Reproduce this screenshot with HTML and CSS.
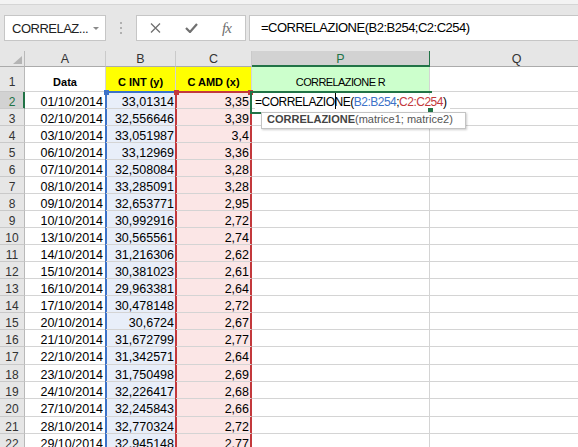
FILE: index.html
```html
<!DOCTYPE html>
<html lang="it">
<head>
    <meta charset="UTF-8">
    <title>Correlazione</title>
    <link rel="stylesheet" href="styles.css">
</head>
<body>
    <div class="topline"></div>
    <div class="formula-row">
        <div class="namebox"><span>CORRELAZ...</span><span class="arrow"></span></div>
        <div class="grip"><i></i><i></i><i></i></div>
        <div class="fbuttons">
            <svg width="11" height="10" viewBox="0 0 11 10"><path d="M1 0.5 L10 9.5 M10 0.5 L1 9.5" stroke="#707070" stroke-width="1.3" fill="none"/></svg>
            <svg width="13" height="10" viewBox="0 0 13 10"><path d="M1 5 L5 9 L12 1" stroke="#707070" stroke-width="2.2" fill="none"/></svg>
            <span class="fx">fx</span>
        </div>
        <div class="fbar">=CORRELAZIONE(B2:B254;C2:C254)</div>
    </div>

    <table class="sheet">
        <colgroup>
            <col class="c-head"><col class="c-a"><col class="c-b"><col class="c-c"><col class="c-p"><col class="c-q">
        </colgroup>
        <tr class="colhead">
            <th class="corner"><svg width="9" height="8" viewBox="0 0 9 8"><path d="M9 0 L9 8 L0 8 Z" fill="#b4b4b4"/></svg></th>
            <th>A</th><th>B</th><th>C</th><th class="sel">P</th><th>Q</th>
        </tr>
        <tr class="r1">
            <th>1</th>
            <td>Data</td>
            <td class="yellow">C INT (y)</td>
            <td class="yellow">C AMD (x)</td>
            <td class="green">CORRELAZIONE R</td>
            <td></td>
        </tr>
        <tr>
            <th class="sel">2</th>
            <td>01/10/2014</td>
            <td class="rb top">33,01314</td>
            <td class="rc top">3,35</td>
            <td class="active">
                <span class="edit">=CORRELAZIO<span class="caret"></span>NE(<span class="ref-b">B2:B254</span>;<span class="ref-c">C2:C254</span>)</span>
                <span class="handle"></span>
                <div class="tip"><b>CORRELAZIONE</b>(matrice1; matrice2)</div>
            </td>
            <td></td>
        </tr>
        <tr><th>3</th><td>02/10/2014</td><td class="rb">32,556646</td><td class="rc">3,39</td><td></td><td></td></tr>
        <tr><th>4</th><td>03/10/2014</td><td class="rb">33,051987</td><td class="rc">3,4</td><td></td><td></td></tr>
        <tr><th>5</th><td>06/10/2014</td><td class="rb">33,12969</td><td class="rc">3,36</td><td></td><td></td></tr>
        <tr><th>6</th><td>07/10/2014</td><td class="rb">32,508084</td><td class="rc">3,28</td><td></td><td></td></tr>
        <tr><th>7</th><td>08/10/2014</td><td class="rb">33,285091</td><td class="rc">3,28</td><td></td><td></td></tr>
        <tr><th>8</th><td>09/10/2014</td><td class="rb">32,653771</td><td class="rc">2,95</td><td></td><td></td></tr>
        <tr><th>9</th><td>10/10/2014</td><td class="rb">30,992916</td><td class="rc">2,72</td><td></td><td></td></tr>
        <tr><th>10</th><td>13/10/2014</td><td class="rb">30,565561</td><td class="rc">2,74</td><td></td><td></td></tr>
        <tr><th>11</th><td>14/10/2014</td><td class="rb">31,216306</td><td class="rc">2,62</td><td></td><td></td></tr>
        <tr><th>12</th><td>15/10/2014</td><td class="rb">30,381023</td><td class="rc">2,61</td><td></td><td></td></tr>
        <tr><th>13</th><td>16/10/2014</td><td class="rb">29,963381</td><td class="rc">2,64</td><td></td><td></td></tr>
        <tr><th>14</th><td>17/10/2014</td><td class="rb">30,478148</td><td class="rc">2,72</td><td></td><td></td></tr>
        <tr><th>15</th><td>20/10/2014</td><td class="rb">30,6724</td><td class="rc">2,67</td><td></td><td></td></tr>
        <tr><th>16</th><td>21/10/2014</td><td class="rb">31,672799</td><td class="rc">2,77</td><td></td><td></td></tr>
        <tr class="tall"><th>17</th><td>22/10/2014</td><td class="rb">31,342571</td><td class="rc">2,64</td><td></td><td></td></tr>
        <tr><th>18</th><td>23/10/2014</td><td class="rb">31,750498</td><td class="rc">2,69</td><td></td><td></td></tr>
        <tr><th>19</th><td>24/10/2014</td><td class="rb">32,226417</td><td class="rc">2,68</td><td></td><td></td></tr>
        <tr class="tall"><th>20</th><td>27/10/2014</td><td class="rb">32,245843</td><td class="rc">2,66</td><td></td><td></td></tr>
        <tr><th>21</th><td>28/10/2014</td><td class="rb">32,770324</td><td class="rc">2,72</td><td></td><td></td></tr>
        <tr><th>22</th><td>29/10/2014</td><td class="rb">32,945148</td><td class="rc">2,77</td><td></td><td></td></tr>
    </table>
</body>
</html>
```

FILE: styles.css
```css
* {
    box-sizing: border-box;
}

body {
    margin: 0;
    width: 578px;
    height: 447px;
    overflow: hidden;
    background: #fff;
    font-family: "Liberation Sans", Arial, sans-serif;
    color: #000;
}

/* Formula bar area */
.topline {
    height: 5px;
    background: #f3f3f3;
    border-bottom: 1px solid #d5d5d5;
}

.formula-row {
    display: flex;
    align-items: center;
    height: 46px;
    padding: 10px 0 10px 4px;
    background: #e6e6e6;
}

.namebox {
    display: flex;
    align-items: center;
    width: 102px;
    height: 26px;
    padding-left: 7px;
    background: #fff;
    border: 1px solid #c6c6c6;
    font-size: 13px;
    letter-spacing: -0.5px;
    color: #222;
}

.namebox .arrow {
    margin-left: auto;
    margin-right: 6px;
    border-left: 3px solid transparent;
    border-right: 3px solid transparent;
    border-top: 3px solid #8a8a8a;
}

.grip {
    width: 30px;
    display: flex;
    flex-direction: column;
    align-items: center;
    gap: 3px;
}

.grip i {
    width: 2px;
    height: 2px;
    background: #b0b0b0;
}

.fbuttons {
    display: flex;
    align-items: center;
    gap: 24px;
    width: 110px;
    height: 26px;
    margin-right: 3px;
    padding-left: 13px;
    background: #fff;
    border: 1px solid #c6c6c6;
}

.fbuttons .fx {
    font-family: "Liberation Serif", serif;
    font-style: italic;
    font-size: 15px;
    color: #6e6e6e;
    letter-spacing: -1px;
}

.fbar {
    flex: 1;
    height: 26px;
    padding-left: 11px;
    line-height: 24px;
    background: #fff;
    border: 1px solid #c6c6c6;
    border-right: none;
    font-size: 13px;
    letter-spacing: -0.5px;
    white-space: nowrap;
}

/* Sheet grid */
.sheet {
    border-collapse: separate;
    border-spacing: 0;
    table-layout: fixed;
    width: 604px;
}

.c-head { width: 25px; }
.c-a { width: 81px; }
.c-b { width: 70px; }
.c-c { width: 76px; }
.c-p { width: 178px; }
.c-q { width: 174px; }

.sheet tr {
    height: 17px;
}

.sheet tr.tall {
    height: 18px;
}

.sheet th,
.sheet td {
    padding: 0;
    border-right: 1px solid #d4d4d4;
    border-bottom: 1px solid #d4d4d4;
    white-space: nowrap;
}

.sheet td {
    padding: 4px 2px 0 2px;
    font-size: 12.5px;
    line-height: 12px;
    text-align: right;
    vertical-align: top;
}

.sheet th {
    padding-top: 4px;
    background: #e6e6e6;
    border-right-color: #b9b9b9;
    border-bottom-color: #c9c9c9;
    font-size: 12px;
    font-weight: normal;
    line-height: 12px;
    color: #333;
    text-align: center;
    vertical-align: top;
}

.sheet .colhead {
    height: 16px;
}

.sheet .colhead th {
    padding-top: 1px;
    border-right-color: #cacaca;
    border-bottom-color: #ababab;
    font-size: 12.5px;
    line-height: 14px;
}

.sheet .colhead th.corner {
    text-align: right;
    padding: 5px 2px 0 0;
    border-right-color: #b9b9b9;
}

.corner svg {
    display: block;
    margin-left: auto;
}

.sheet .colhead th.sel {
    background: #d2d2d2;
    color: #217346;
    border-bottom-color: #217346;
    box-shadow: inset 0 -1px 0 #217346;
}

.sheet th.sel {
    background: #d2d2d2;
    color: #217346;
    border-right-color: #217346;
    box-shadow: inset -1px 0 0 #217346;
}

/* Title row */
.sheet .r1 {
    height: 25px;
}

.sheet .r1 th {
    vertical-align: bottom;
    padding: 0 0 3px;
}

.sheet .r1 td {
    vertical-align: bottom;
    text-align: center;
    padding: 0 0 2px;
    font-size: 11px;
    font-weight: bold;
    line-height: 13px;
}

.sheet .r1 td.yellow {
    background: #ffff00;
}

.sheet .r1 td.green {
    background: #ccffcc;
    font-size: 11px;
    letter-spacing: -0.6px;
    font-weight: normal;
}

/* Referenced ranges */
.sheet td.rb {
    padding-right: 1px;
    background: #e8eef9;
    box-shadow: -1px 0 0 #3c72c8, inset 1px 0 0 #3c72c8;
}

.sheet td.rb.top {
    position: relative;
    box-shadow: -1px 0 0 #3c72c8, inset 1px 0 0 #3c72c8, 0 -1px 0 #3c72c8, inset 0 1px 0 #3c72c8;
}

.sheet td.rc {
    background: #fbe6e6;
    border-right-color: #c3393c;
    box-shadow: -1px 0 0 #c3393c, inset 1px 0 0 #c3393c, inset -1px 0 0 #c3393c;
}

.sheet td.rc.top {
    position: relative;
    box-shadow: -1px 0 0 #c3393c, inset 1px 0 0 #c3393c, inset -1px 0 0 #c3393c, 0 -1px 0 #c3393c, inset 0 1px 0 #c3393c;
}

.rb.top::before,
.rc.top::before,
.rc.top::after {
    content: "";
    position: absolute;
    top: -2px;
    left: -2px;
    width: 5px;
    height: 5px;
    background: #3c72c8;
}

.rc.top::before,
.rc.top::after {
    background: #c3393c;
}

.rc.top::after {
    left: auto;
    right: -2px;
}

/* Active cell being edited */
.sheet td.active {
    position: relative;
    padding-left: 3px;
    text-align: left;
    font-size: 12px;
    letter-spacing: -0.5px;
}

.active::after {
    content: "";
    position: absolute;
    left: -2px;
    top: -1px;
    width: 180px;
    height: 19px;
    border: 2px solid #217346;
    border-right: none;
}

.edit {
    position: relative;
    z-index: 1;
    padding-right: 4px;
    background: #fff;
}

.ref-b { color: #3c72c8; }
.ref-c { color: #c3393c; }

.caret {
    position: relative;
}

.caret::before {
    content: "";
    position: absolute;
    left: 0;
    top: -2px;
    width: 1px;
    height: 16px;
    background: #000;
}

.handle {
    position: absolute;
    left: 175px;
    top: 15px;
    width: 7px;
    height: 7px;
    background: #217346;
    border: 1px solid #fff;
    z-index: 2;
}

.tip {
    position: absolute;
    left: 9px;
    top: 20px;
    z-index: 3;
    width: 205px;
    height: 17px;
    padding-left: 5px;
    background: #fff;
    border: 1px solid #c4c4c4;
    box-shadow: 1px 1px 2px rgba(0, 0, 0, 0.2);
    font-size: 11px;
    line-height: 13px;
    letter-spacing: 0;
    color: #555;
}

.tip b {
    color: #444;
}
```
